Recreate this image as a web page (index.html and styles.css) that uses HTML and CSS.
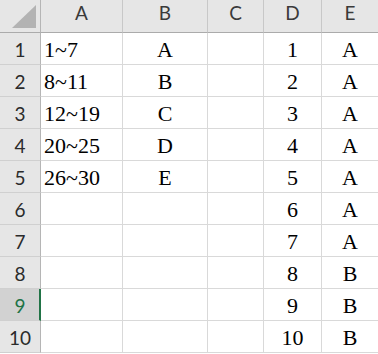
FILE: index.html
```html
<!DOCTYPE html>
<html>
<head>
<meta charset="utf-8">
<link rel="stylesheet" href="styles.css">
</head>
<body>
<div class="sheet">
  <div class="hc corner"><svg width="24" height="23" viewBox="0 0 24 23"><polygon points="24,0 24,23 0,23" fill="#b3b3b3"/></svg></div>
  <div class="hc">A</div>
  <div class="hc">B</div>
  <div class="hc">C</div>
  <div class="hc">D</div>
  <div class="hc last">E</div>

  <div class="rh">1</div><div class="c l">1~7</div><div class="c">A</div><div class="c"></div><div class="c">1</div><div class="c last">A</div>
  <div class="rh">2</div><div class="c l">8~11</div><div class="c">B</div><div class="c"></div><div class="c">2</div><div class="c last">A</div>
  <div class="rh">3</div><div class="c l">12~19</div><div class="c">C</div><div class="c"></div><div class="c">3</div><div class="c last">A</div>
  <div class="rh">4</div><div class="c l">20~25</div><div class="c">D</div><div class="c"></div><div class="c">4</div><div class="c last">A</div>
  <div class="rh">5</div><div class="c l">26~30</div><div class="c">E</div><div class="c"></div><div class="c">5</div><div class="c last">A</div>
  <div class="rh">6</div><div class="c l"></div><div class="c"></div><div class="c"></div><div class="c">6</div><div class="c last">A</div>
  <div class="rh">7</div><div class="c l"></div><div class="c"></div><div class="c"></div><div class="c">7</div><div class="c last">A</div>
  <div class="rh">8</div><div class="c l"></div><div class="c"></div><div class="c"></div><div class="c">8</div><div class="c last">B</div>
  <div class="rh sel">9</div><div class="c l"></div><div class="c"></div><div class="c"></div><div class="c">9</div><div class="c last">B</div>
  <div class="rh">10</div><div class="c l"></div><div class="c"></div><div class="c"></div><div class="c">10</div><div class="c last">B</div>
</div>
</body>
</html>
```
FILE: styles.css
```css
html, body {
  margin: 0;
  padding: 0;
  background: #ffffff;
}
.sheet {
  display: grid;
  grid-template-columns: 41px 82px 85px 56px 58px 56px;
  grid-template-rows: 33px repeat(10, 32px);
  width: 378px;
  overflow: hidden;
}
.hc {
  box-sizing: border-box;
  background: #e6e6e6;
  border-right: 1px solid #c8c8c8;
  border-bottom: 1px solid #ababab;
  font-family: Lato, "Liberation Sans", sans-serif;
  font-size: 19px;
  line-height: 25px;
  color: #3a3a3a;
  text-align: center;
}
.hc.last { border-right: none; }
.corner {
  display: flex;
  justify-content: flex-end;
  align-items: flex-end;
  padding: 0 4px 4px 0;
  border-right-color: #b5b5b5;
}
.rh {
  box-sizing: border-box;
  background: #e6e6e6;
  border-right: 1px solid #b5b5b5;
  border-bottom: 1px solid #d0d0d0;
  font-family: Lato, "Liberation Sans", sans-serif;
  font-size: 19px;
  line-height: 23px;
  padding-top: 5px;
  color: #2b2b2b;
  text-align: center;
}
.rh.sel {
  background: #d2d2d2;
  color: #217346;
  border-right: 2px solid #217346;
  padding-left: 1px;
}
.c {
  box-sizing: border-box;
  border-right: 1px solid #d9d9d9;
  border-bottom: 1px solid #d9d9d9;
  font-family: "Liberation Serif", "Times New Roman", serif;
  font-size: 22px;
  line-height: 24px;
  padding-top: 5px;
  color: #000000;
  text-align: center;
}
.c.l {
  text-align: left;
  padding-left: 3px;
}
.c.last { border-right: none; }
```
